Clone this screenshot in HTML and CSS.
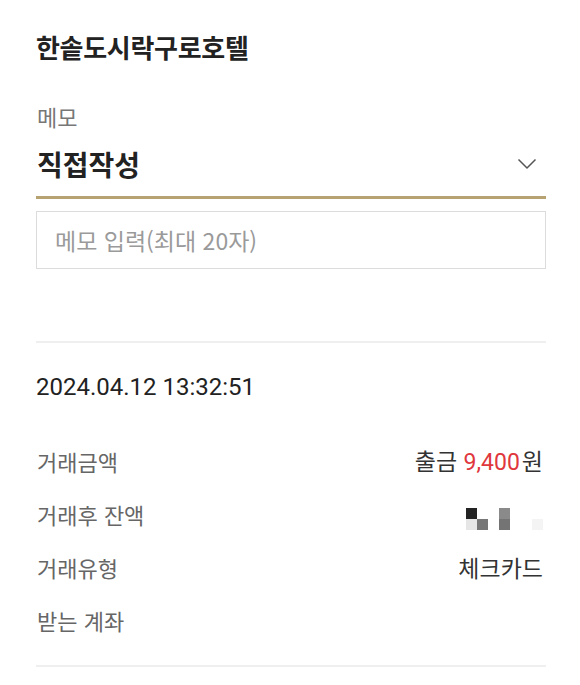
FILE: index.html
```html
<!DOCTYPE html>
<html lang="ko">
<head>
<meta charset="utf-8">
<link rel="stylesheet" href="styles.css">
</head>
<body>
<div class="page">
  <h1 class="title">한솥도시락구로호텔</h1>

  <div class="memo-label">메모</div>
  <div class="select">
    <span class="select-value">직접작성</span>
    <svg class="chevron" width="20" height="12" viewBox="0 0 20 12">
      <path d="M1.5 1.5 L10 10 L18.5 1.5" fill="none" stroke="#555" stroke-width="1.5"/>
    </svg>
  </div>
  <div class="memo-input">메모 입력(최대 20자)</div>

  <div class="divider first"></div>

  <div class="date">2024.04.12 13:32:51</div>

  <div class="rows">
    <div class="row">
      <span class="label">거래금액</span>
      <span class="value">출금 <span class="amount">9,400</span>원</span>
    </div>
    <div class="row">
      <span class="label">거래후 잔액</span>
      <span class="masked">
        <span class="mcol">
          <span class="px dark"></span>
          <span class="px light"></span>
        </span>
        <span class="mcol gap-after">
          <span class="px mid"></span>
        </span>
        <span class="mcol gap-after-wide">
          <span class="px tall"></span>
        </span>
        <span class="mcol">
          <span class="px faint"></span>
        </span>
      </span>
    </div>
    <div class="row">
      <span class="label">거래유형</span>
      <span class="value">체크카드</span>
    </div>
    <div class="row">
      <span class="label">받는 계좌</span>
      <span class="value"></span>
    </div>
  </div>

  <div class="divider last"></div>
</div>
</body>
</html>
```

FILE: styles.css
```css
html, body {
  margin: 0;
  padding: 0;
  background: #ffffff;
}

body {
  font-family: "Noto Sans CJK KR", "Noto Sans", sans-serif;
  color: #222222;
}

.page {
  padding: 30px 34px 0 36px;
}

.title {
  margin: 0;
  font-size: 26px;
  line-height: 34px;
  font-weight: 700;
  color: #222222;
  letter-spacing: -0.3px;
}

.memo-label {
  margin-top: 38px;
  font-size: 22px;
  line-height: 28px;
  color: #777777;
  padding-left: 1px;
}

.select {
  margin-top: 16px;
  display: flex;
  align-items: center;
  justify-content: space-between;
  padding: 0 9px 14px 1px;
  border-bottom: 3px solid #b7a272;
}

.select-value {
  font-size: 28px;
  line-height: 36px;
  font-weight: 700;
  color: #222222;
}

.chevron {
  display: block;
}

.memo-input {
  margin-top: 12px;
  box-sizing: border-box;
  height: 58px;
  border: 1px solid #dcdcdc;
  padding-left: 18px;
  display: flex;
  align-items: center;
  font-size: 23px;
  color: #9a9a9a;
}

.divider {
  height: 2px;
  background: #efefef;
}

.divider.first {
  margin-top: 72px;
}

.date {
  margin-top: 30px;
  font-family: Roboto, "Noto Sans CJK KR", sans-serif;
  font-size: 24px;
  line-height: 28px;
  color: #222222;
}

.rows {
  margin-top: 46px;
  display: flex;
  flex-direction: column;
  gap: 25px;
}

.row {
  display: flex;
  justify-content: space-between;
  align-items: center;
  height: 28px;
  padding-left: 1px;
  padding-right: 3px;
}

.label {
  font-size: 22px;
  line-height: 28px;
  color: #666666;
}

.value {
  font-size: 23px;
  line-height: 28px;
  color: #333333;
}

.amount {
  font-family: Roboto, "Noto Sans CJK KR", sans-serif;
  color: #e0373d;
  margin-right: 2px;
}

.masked {
  display: flex;
  align-items: flex-end;
  height: 22px;
  margin-top: 10px;
}

.mcol {
  display: flex;
  flex-direction: column;
}

.mcol.gap-after {
  margin-right: 11px;
}

.mcol.gap-after-wide {
  margin-right: 22px;
}

.px {
  display: block;
  width: 11px;
  height: 11px;
}

.px.dark { background: #232323; }
.px.light { background: #e6e6e6; }
.px.mid { background: #777777; }
.px.tall {
  height: 22px;
  background: linear-gradient(#8a8a8a 50%, #747474 50%);
}
.px.faint { background: #f4f4f4; }

.divider.last {
  margin-top: 31px;
}
```
